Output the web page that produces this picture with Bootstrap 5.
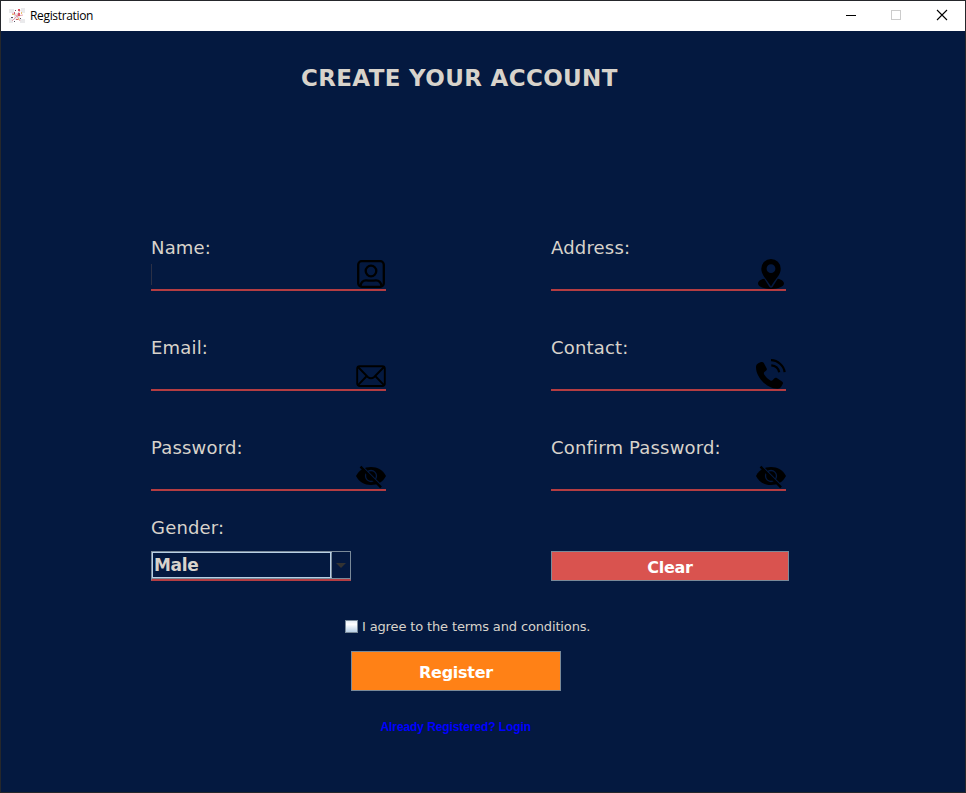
<!DOCTYPE html>
<html lang="en">
<head>
<meta charset="utf-8">
<meta name="viewport" content="width=device-width, initial-scale=1">
<title>Registration</title>
<link href="https://cdn.jsdelivr.net/npm/bootstrap@5.3.0/dist/css/bootstrap.min.css" rel="stylesheet">
<style>
html, body { height: 100%; }
body { background: #041940; font-family: "DejaVu Sans", sans-serif; color: #d8d3cb; }
.window { width: 966px; height: 793px; border: 1px solid #25272b; background: #041940; }
.titlebar { height: 30px; padding-left: 8px; font: 12px/30px "Open Sans", "Noto Sans", sans-serif; }
.titlebar svg { display: block; }
.win-title { margin-left: 5px; letter-spacing: -.34px; }
.heading { margin: 32px 0 0 300px; font-size: 23px; line-height: 30px; font-weight: 700; letter-spacing: .34px; white-space: nowrap; }
.form-grid { display: grid; grid-template-columns: 235px 235px; column-gap: 165px; row-gap: 45px; margin: 143px 0 0 150px; }
.field-label { display: block; height: 22px; font-size: 18px; line-height: 24px; letter-spacing: .18px; white-space: nowrap; }
.line-field { height: 33px; border-bottom: 2px solid #b53d42; }
.line-field input { width: 205px; background: none; border: 0; padding: 0; outline: 0; border-radius: 0; color: inherit; }
.line-field svg { display: block; flex: none; overflow: visible; }
.caret { width: 1px; height: 21px; margin-top: 6px; background: #2b3046; flex: none; }
.caret + input { width: 204px; }
.lower { display: grid; grid-template-columns: 200px 238px; column-gap: 200px; margin: 25px 0 0 150px; }
.combo { height: 30px; margin-top: 13px; border: 1px solid #7a8a99; border-bottom: 2px solid #b53d42; }
.combo-value { width: 180px; height: 26px; border: 1px solid #b8cfe5; border-right-color: #7a8a99; padding-left: 1px; font-size: 17px; font-weight: 700; line-height: 25px; letter-spacing: -.3px; box-shadow: inset -1px 0 #b8cfe5, 0 1px #7a8a99; }
.combo-arrow { width: 18px; border-bottom: 1px solid #7a8a99; }
.flat-btn { border: 1px solid #7a8a99; border-radius: 0; padding: 0; color: #fff; font-size: 16px; font-weight: 700; letter-spacing: -.25px; }
.btn-clear { width: 238px; height: 30px; background: #d9534f; line-height: 31px; }
.btn-register { width: 210px; height: 40px; margin: 17px 0 0 350px; background: #ff8116; line-height: 41px; }
.terms { margin: 37px 0 0 344px; height: 16px; font-size: 13px; line-height: 16px; letter-spacing: -.14px; white-space: nowrap; }
.terms label { padding-top: 1px; }
.terms input { appearance: none; width: 13px; height: 13px; margin: 0 4px 0 0; border: 1px solid #7a8a99; background: linear-gradient(#e6eef6, #fff 30%, #b8cfe5); }
.login { display: block; margin: 28px 0 0 379.5px; font: 700 12px/16px "Liberation Sans", sans-serif; letter-spacing: -.09px; color: #0000ff; text-decoration: none; width: max-content; }
</style>
</head>
<body>
<main class="window overflow-hidden">
  <header class="titlebar d-flex align-items-center bg-white text-black">
    <svg width="16" height="16" viewBox="0 0 16 16">
      <path fill="#eaeaec" d="M0 1h5v4H0zM12 0h4v5h-4zM0 10h4v5H0zM11 11h5v4h-5zM5 5h6v7H5z"/>
      <path fill="none" stroke="#e39aa6" stroke-width=".9" d="M8 8l3-6M8 8L3 5M8 8l6-1M8 8l-5 5M8 8l3 5"/>
      <path fill="#d95565" d="M9 1h2v2H9zM9 5h2v3H9zM5 4h1v2H5zM7 11h2v1H7z"/>
      <path fill="#5a5062" d="M6 2h1v1H6zM2 9h2v1H2zM11 10h1v1h-1zM5 13h1v1H5z"/>
      <path fill="#e9c06e" d="M3 6h2v1H3zM12 4h1v2h-1zM9 10h1v2H9z"/>
    </svg>
    <span class="win-title">Registration</span>
    <svg class="ms-auto" width="119" height="30" viewBox="845 0 119 30" fill="none" shape-rendering="crispEdges">
      <path stroke="#000" d="M845 14.500h10"/>
      <path stroke="#ccc" d="M890.500 9.500h9v9h-9z"/>
      <path stroke="#000" shape-rendering="auto" stroke-width="1.100" d="M936 9l10 10M946 9l-10 10"/>
    </svg>
  </header>

  <h1 class="heading">CREATE YOUR ACCOUNT</h1>

  <form>
    <div class="form-grid">
      <div>
        <label class="field-label" for="name">Name:</label>
        <div class="line-field d-flex">
          <span class="caret"></span><input id="name" type="text">
          <svg width="30" height="31" viewBox="0 0 30 31" fill="none" stroke="#000" stroke-width="2.300">
            <rect x="2.200" y="3.200" width="25.600" height="25.600" rx="3.500"/>
            <circle cx="15" cy="13" r="5.300"/>
            <path d="M4.500 28c.5-3.500 2.500-5.600 5.500-5.600 2 0 3 .3 5 .3s3-.3 5-.3c3 0 5 2.100 5.500 5.600"/>
          </svg>
        </div>
      </div>
      <div>
        <label class="field-label" for="address">Address:</label>
        <div class="line-field d-flex">
          <input id="address" type="text">
          <svg width="30" height="31" viewBox="0 0 30 31">
            <path fill-rule="evenodd" d="M15 1a9.700 9.700 0 0 0-9.700 9.700C5.300 17 10 20 15 28.500 20 20 24.700 17 24.700 10.700A9.700 9.700 0 0 0 15 1zm0 5.300a4.400 4.400 0 1 1 0 8.800 4.400 4.400 0 0 1 0-8.800z"/>
            <path d="M8.200 20.800C4.600 21.500 2 23.300 2 25.600 2 28.700 7.500 31 15 31s13-2.300 13-5.400c0-2.300-2.600-4.100-6.200-4.800C20 23.500 18 26.500 16.700 28.800a2 2 0 0 1-3.400 0C12 26.500 10 23.500 8.200 20.800z"/>
          </svg>
        </div>
      </div>
      <div>
        <label class="field-label" for="email">Email:</label>
        <div class="line-field d-flex">
          <input id="email" type="email">
          <svg width="30" height="31" viewBox="0 0 30 31" fill="none" stroke="#000" stroke-width="1.900">
            <rect x="1.200" y="8.200" width="27.600" height="19.800" rx="2.500"/>
            <path d="M2 9l9.800 10q3.200 2.600 6.400 0L28 9M2 27.200l8.800-9.200M28 27.200l-8.800-9.200"/>
          </svg>
        </div>
      </div>
      <div>
        <label class="field-label" for="contact">Contact:</label>
        <div class="line-field d-flex">
          <input id="contact" type="tel">
          <svg width="30" height="31" viewBox="0 0 30 31">
            <path d="M2.300 5.300L5 4.100c1.200-.5 2.200-.1 2.800 1l2.800 5.100c.5 1 .3 1.900-.6 2.600l-1.600 1.300c-.7.700-.7 1.500-.2 2.400 1.600 2.500 3.700 4.600 6.200 6 1 .5 1.700.4 2.400-.4l1.400-1.600c.7-.8 1.600-1 2.600-.4l5.200 3.300c1 .7 1.300 1.600.7 2.700l-1.500 2.600c-.8 1.300-2 2-3.600 2C11 30.700 0 19.500 0 9.300c0-1.900.8-3.200 2.300-4z"/>
            <path fill="none" stroke="#000" stroke-width="2.200" d="M15 2.200c6.600-.2 13 5.600 13.600 11.900M15.300 7.300c4 .3 7.200 3.100 7.900 7"/>
          </svg>
        </div>
      </div>
      <div>
        <label class="field-label" for="password">Password:</label>
        <div class="line-field d-flex">
          <input id="password" type="password">
          <svg width="30" height="31" viewBox="0 0 30 31">
            <path d="M0 18C3 12 8.500 9 15 9s12 3 15 9c-3 6-8.500 9-15 9S3 24 0 18z"/>
            <circle cx="15" cy="18" r="5.500" fill="none" stroke="#041940" stroke-width="1.300"/>
            <path stroke="#041940" stroke-width="1.400" d="M6.200 8.200l20 20"/>
            <path stroke="#000" stroke-width="2.400" d="M4.500 8.600l20.500 20.700"/>
          </svg>
        </div>
      </div>
      <div>
        <label class="field-label" for="confirm">Confirm Password:</label>
        <div class="line-field d-flex">
          <input id="confirm" type="password">
          <svg width="30" height="31" viewBox="0 0 30 31">
            <path d="M0 18C3 12 8.500 9 15 9s12 3 15 9c-3 6-8.500 9-15 9S3 24 0 18z"/>
            <circle cx="15" cy="18" r="5.500" fill="none" stroke="#041940" stroke-width="1.300"/>
            <path stroke="#041940" stroke-width="1.400" d="M6.200 8.200l20 20"/>
            <path stroke="#000" stroke-width="2.400" d="M4.500 8.600l20.500 20.700"/>
          </svg>
        </div>
      </div>
    </div>

    <div class="lower align-items-end">
      <div>
        <span class="field-label">Gender:</span>
        <div class="combo d-flex" role="combobox" aria-label="Gender">
          <div class="combo-value">Male</div>
          <div class="combo-arrow d-flex align-items-center justify-content-center">
            <svg width="10" height="5" viewBox="0 0 10 5"><path fill="#333" d="M0 0h10L5 5z"/></svg>
          </div>
        </div>
      </div>
      <button type="button" class="btn flat-btn btn-clear">Clear</button>
    </div>

    <div class="terms d-flex align-items-center">
      <input type="checkbox" id="terms"><label for="terms">I agree to the terms and conditions.</label>
    </div>
    <button type="button" class="btn flat-btn btn-register d-block">Register</button>
    <a class="login" href="#">Already Registered? Login</a>
  </form>
</main>
<script src="https://cdn.jsdelivr.net/npm/bootstrap@5.3.0/dist/js/bootstrap.bundle.min.js"></script>
</body>
</html>
